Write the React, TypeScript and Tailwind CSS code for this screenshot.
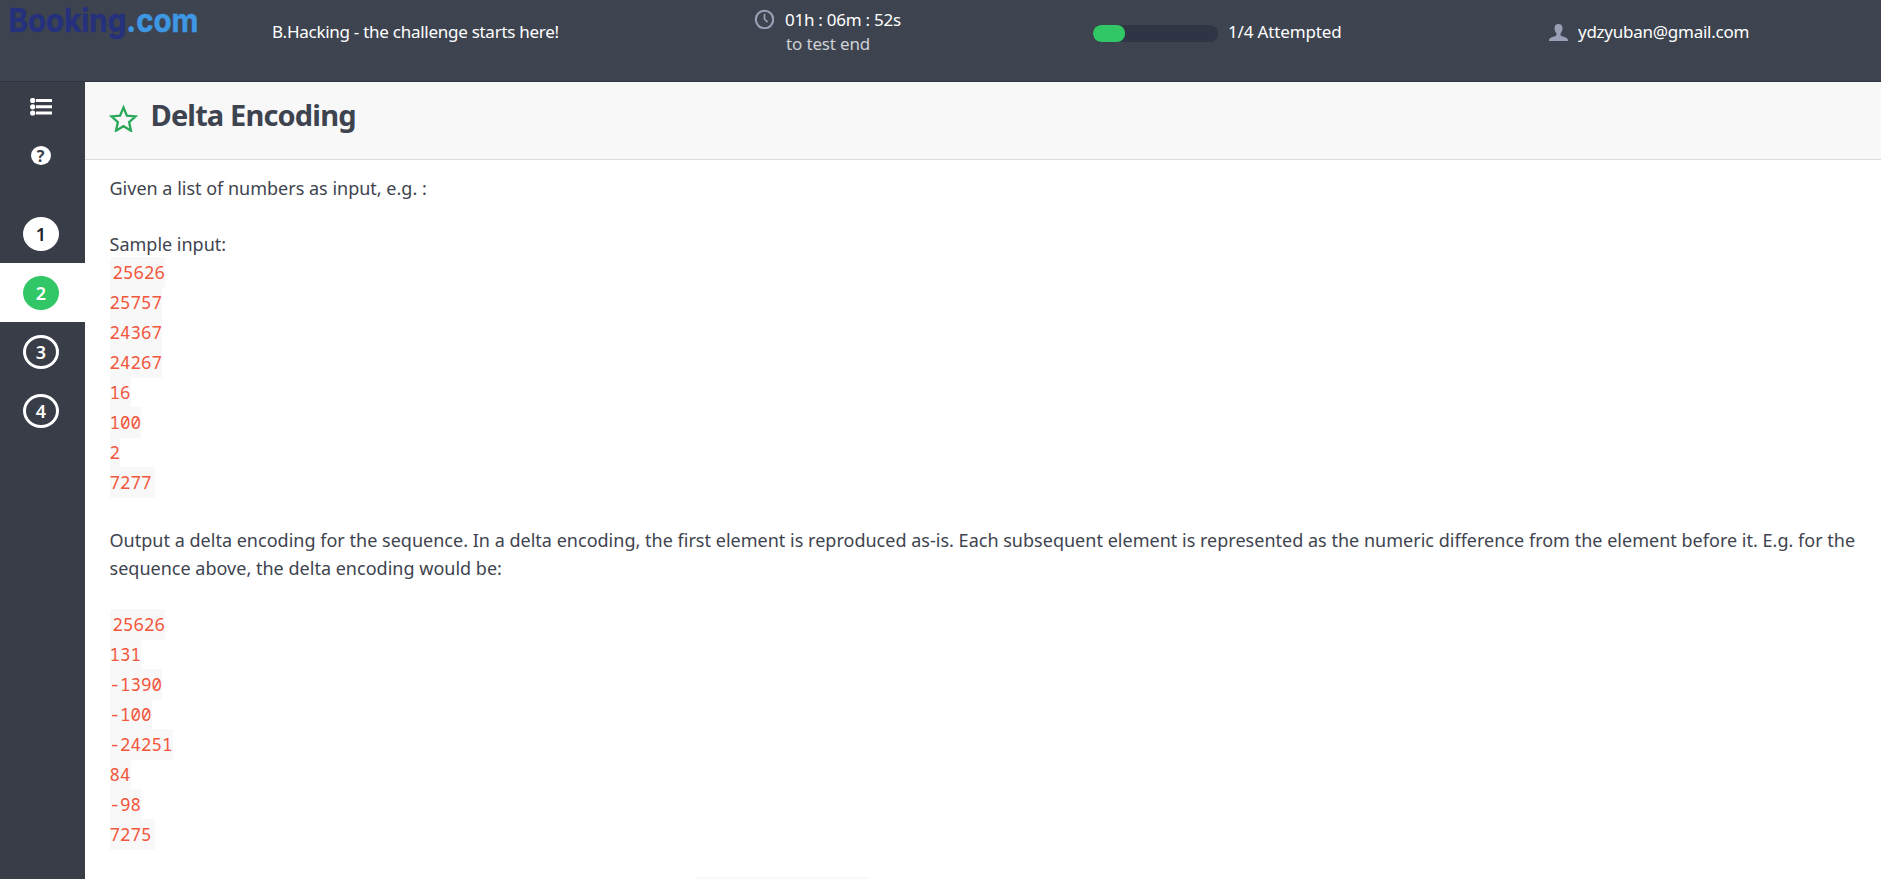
import type { ReactNode } from "react";

const sampleInput = ["25626", "25757", "24367", "24267", "16", "100", "2", "7277"];
const deltaOutput = ["25626", "131", "-1390", "-100", "-24251", "84", "-98", "7275"];

function Logo() {
  return (
    <svg className="block h-12 w-[210px]" viewBox="0 0 210 48" fontFamily="Inter, sans-serif" fontWeight="700" fontSize="33">
      <text x="8.500" y="32" strokeWidth="0.500" textLength="190" lengthAdjust="spacingAndGlyphs">
        <tspan fill="#25317c" stroke="#25317c">Booking</tspan>
        <tspan fill="#3d97e3" stroke="#3d97e3">.com</tspan>
      </text>
    </svg>
  );
}

function ClockIcon() {
  return (
    <svg className="mt-[9px] h-5 w-5" viewBox="0 0 20 20" fill="none" stroke="#9a9fb5">
      <circle cx="10.500" cy="10.500" r="8.700" strokeWidth="2.100" />
      <path d="M10.500 4.800V10l3 3.200" strokeWidth="1.700" />
    </svg>
  );
}

function UserIcon() {
  return (
    <svg className="mt-6 h-[17px] w-[19px]" viewBox="0 0 19 17" fill="#9a9fb5">
      <path d="M9.5 0C12.2 0 13.5 1.6 13.5 4.2c0 2.300-.7 3.700-1.900 4.900v2.200c.5 1 6 2 7 3.600.3.500.4 1.300.4 2.100H0c0-.8.1-1.600.4-2.100 1-1.600 6.500-2.600 7-3.600V9.100C6.200 7.900 5.500 6.500 5.500 4.200 5.500 1.600 6.800 0 9.500 0z" />
    </svg>
  );
}

function Header() {
  return (
    <header className="flex h-[82px] shrink-0 border-b border-[#2f3341] bg-[#3e444f] text-[17px] leading-6 whitespace-nowrap text-white">
      <div className="w-[272px]">
        <Logo />
      </div>
      <p className="w-[482px] pt-5 tracking-[-0.27px]">B.Hacking - the challenge starts here!</p>
      <div className="flex w-[339px]">
        <ClockIcon />
        <div className="ml-[11px] pt-2 tracking-[-0.25px]">
          <p>01h : 06m : 52s</p>
          <p className="pl-px tracking-[-0.15px] text-[#cfd1d6]">to test end</p>
        </div>
      </div>
      <div className="flex w-[456px]">
        <div className="mt-[25px] h-[17px] w-[125px] overflow-hidden rounded-lg bg-[#303545]">
          <div className="h-full w-8 rounded-lg bg-[#32c766]" />
        </div>
        <p className="ml-2.5 pt-5 tracking-[-0.15px]">1/4 Attempted</p>
      </div>
      <div className="flex">
        <UserIcon />
        <p className="ml-2.5 pt-5 tracking-[-0.25px]">ydzyuban@gmail.com</p>
      </div>
    </header>
  );
}

function Step({ active, className, children }: { active?: boolean; className: string; children: ReactNode }) {
  return (
    <div className={active ? "flex h-[59px] bg-white" : "flex h-[59px]"}>
      <span
        className={`mt-[13px] ml-[23px] flex h-[34px] w-9 items-center justify-center rounded-[50%] text-[18px] leading-none font-semibold ${className}`}
      >
        {children}
      </span>
    </div>
  );
}

function Sidebar() {
  return (
    <aside className="w-[85px] shrink-0 bg-[#383d48]">
      <svg className="mt-4 ml-[30px] h-[18px] w-[22px]" viewBox="0 0 22 18" fill="#fff">
        <circle cx="2.700" cy="2.500" r="2.600" />
        <circle cx="2.700" cy="8.800" r="2.600" />
        <circle cx="2.700" cy="15" r="2.600" />
        <path d="M6 1h16v3H6zM6 7.300h16v3H6zM6 13.500h16v3H6z" />
      </svg>
      <span className="mt-[30px] ml-[30.5px] flex h-[19px] w-5 items-center justify-center rounded-[50%] bg-white text-[16px] leading-none font-bold text-[#383d48]">
        ?
      </span>
      <div className="mt-[39px]">
        <Step className="bg-white text-[#20242c]">1</Step>
        <Step active className="bg-[#32c766] text-white">
          2
        </Step>
        <Step className="border-3 border-white text-white">3</Step>
        <Step className="border-3 border-white text-white">4</Step>
      </div>
    </aside>
  );
}

function CodeBlock({ lines }: { lines: string[] }) {
  return (
    <code className="flex flex-col items-start font-['Noto_Sans_Mono','DejaVu_Sans_Mono',monospace] text-[17.5px] leading-[31px] text-[#f2563c]">
      {lines.map((line, i) => (
        <span
          key={i}
          className={
            i === 0
              ? "h-[31px] rounded-tl-[3px] bg-[#f8f8f8] pl-[3px]"
              : i === lines.length - 1
                ? "-mt-px h-[31px] rounded-r-[3px] bg-[#f8f8f8] pr-[3px]"
                : "-mt-px h-[31px] bg-[#f8f8f8]"
          }
        >
          {line}
        </span>
      ))}
    </code>
  );
}

export default function App() {
  return (
    <div className="flex h-[879px] flex-col overflow-hidden bg-white font-['Noto_Sans','Open_Sans',sans-serif]">
      <Header />
      <div className="flex min-h-0 flex-1">
        <Sidebar />
        <main className="min-w-0 flex-1 text-[#3e444f]">
          <div className="flex h-[78px] border-b border-[#dddddd] bg-[#f8f8f8] pl-6">
            <svg className="mt-[22px] h-7 w-[29px]" viewBox="0 0 29 28" fill="none" stroke="#2aa85a" strokeWidth="2.300">
              <path d="M14.500 3.500l3.400 8.100 8.700.8-6.500 5.700 1.900 8.600-7.500-4.500-7.500 4.500 1.900-8.600-6.500-5.700 8.700-.8z" />
            </svg>
            <h1 className="ml-[12.5px] pt-[13px] text-[29px] leading-10 font-bold tracking-[-0.85px]">Delta Encoding</h1>
          </div>
          <div className="pt-3.5 pl-[24.5px] text-[18px] leading-7">
            <p>Given a list of numbers as input, e.g. :</p>
            <p className="mt-7">Sample input:</p>
            <div className="-mt-px">
              <CodeBlock lines={sampleInput} />
            </div>
            <p className="mt-7 tracking-[0.015px]">
              Output a delta encoding for the sequence. In a delta encoding, the first element is reproduced as-is. Each
              subsequent element is represented as the numeric difference from the element before it. E.g. for the
              sequence above, the delta encoding would be:
            </p>
            <div className="mt-[27px]">
              <CodeBlock lines={deltaOutput} />
            </div>
            <div className="mt-[27px] ml-[586px] h-7 w-[173px] rounded-[3px] bg-[#f8f8f8]" />
          </div>
        </main>
      </div>
    </div>
  );
}
